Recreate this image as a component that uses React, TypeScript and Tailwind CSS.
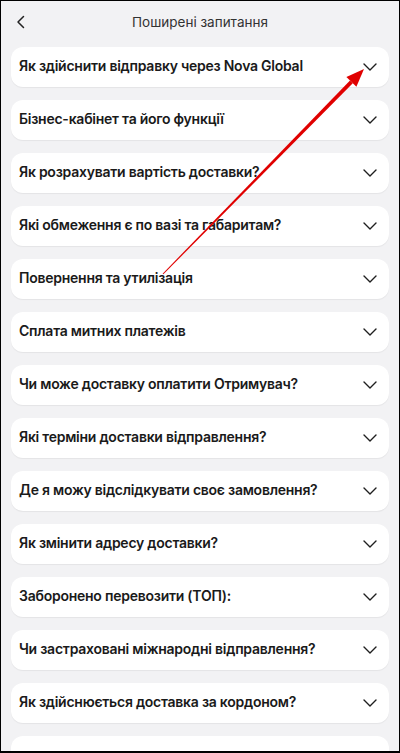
import React from "react";

const items = [
  "Як здійснити відправку через Nova Global",
  "Бізнес-кабінет та його функції",
  "Як розрахувати вартість доставки?",
  "Які обмеження є по вазі та габаритам?",
  "Повернення та утилізація",
  "Сплата митних платежів",
  "Чи може доставку оплатити Отримувач?",
  "Які терміни доставки відправлення?",
  "Де я можу відслідкувати своє замовлення?",
  "Як змінити адресу доставки?",
  "Заборонено перевозити (ТОП):",
  "Чи застраховані міжнародні відправлення?",
  "Як здійснюється доставка за кордоном?",
];

function Chevron() {
  return (
    <svg width="14" height="8" viewBox="0 0 14 8" fill="none" className="shrink-0">
      <path d="M1 1L7 7L13 1" stroke="#1f1f1f" strokeWidth="1.4" strokeLinecap="round" strokeLinejoin="round" />
    </svg>
  );
}

export default function App() {
  return (
    <div
      className="relative w-[400px] h-[753px] overflow-hidden bg-[#f2f2f4] border border-black border-b-2"
      style={{ fontFamily: "Inter, 'Noto Sans', sans-serif" }}
    >
      <div className="flex items-center h-[42px] px-[15px] relative">
        <svg width="10" height="14" viewBox="0 0 10 14" fill="none">
          <path d="M7.5 1.5L2 7L7.5 12.5" stroke="#222" strokeWidth="1.5" strokeLinecap="round" strokeLinejoin="round" />
        </svg>
        <div className="absolute inset-x-0 top-0 h-[42px] flex items-center justify-center text-[13.5px] text-[#333]">
          Поширені запитання
        </div>
      </div>
      <div className="flex flex-col gap-[13px] px-[10px] pt-[4px]">
        {items.map((t) => (
          <div
            key={t}
            className="h-[40px] bg-white rounded-[12px] flex items-center justify-between pl-[8px] pr-[12px] shadow-[0_1px_1px_rgba(0,0,0,0.06)]"
          >
            <span className="text-[14px] leading-[18px] pb-[2px] font-semibold text-[#1a1a1a] tracking-[-0.25px]">{t}</span>
            <Chevron />
          </div>
        ))}
        <div className="h-[40px] bg-white rounded-[12px] shadow-[0_1px_1px_rgba(0,0,0,0.06)]" />
      </div>
      <svg className="absolute left-0 top-0 pointer-events-none" width="400" height="753" viewBox="0 0 400 753">
        <polygon points="162.4,273.3 161.6,272.7 349.0,79.5 351.8,82.3" fill="#e00000" />
        <polygon points="363,68 355.4,85.8 345.4,76.0" fill="#e00000" />
      </svg>
    </div>
  );
}
